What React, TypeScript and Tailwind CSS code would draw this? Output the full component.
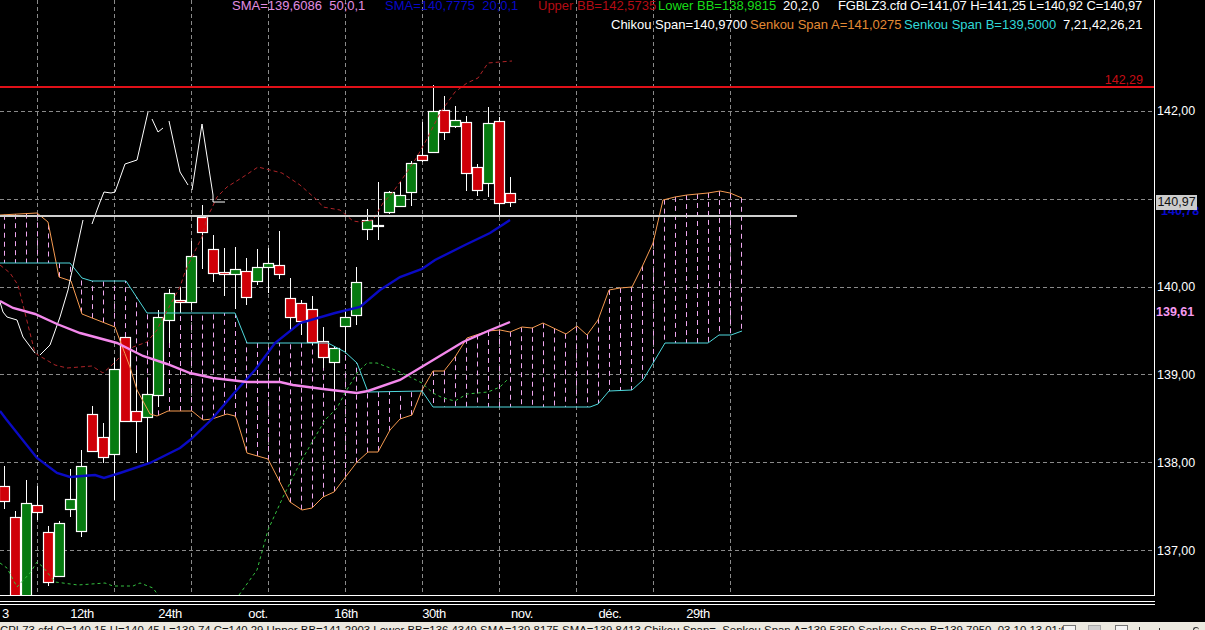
type Pt = [number, number];

// [wickTop, bodyTop, bodyBottom, wickBottom, up]
const candles: [number, number, number, number, boolean][] = [
  [466, 486, 501, 509, false],
  [511, 517, 600, 600, false],
  [480, 503, 600, 600, true],
  [486, 505, 512, 520, false],
  [526, 532, 582, 586, false],
  [521, 523, 576, 576, true],
  [469, 499, 509, 517, true],
  [450, 466, 531, 537, true],
  [406, 414, 451, 452, false],
  [423, 437, 457, 463, false],
  [358, 369, 454, 500, true],
  [337, 337, 421, 421, false],
  [370, 411, 421, 453, false],
  [380, 394, 417, 462, true],
  [310, 317, 395, 407, true],
  [289, 293, 320, 343, true],
  [287, 300, 302, 313, false],
  [241, 256, 302, 310, true],
  [205, 217, 232, 269, false],
  [235, 249, 273, 282, false],
  [248, 272, 274, 296, false],
  [247, 269, 274, 309, true],
  [258, 271, 297, 305, false],
  [249, 267, 281, 285, true],
  [248, 263, 267, 293, true],
  [231, 265, 274, 279, false],
  [278, 298, 317, 330, false],
  [300, 303, 321, 335, false],
  [296, 309, 342, 345, false],
  [327, 341, 357, 368, false],
  [346, 348, 362, 400, true],
  [309, 317, 326, 353, true],
  [267, 282, 315, 325, true],
  [209, 220, 229, 240, true],
  [182, 225, 226, 240, true],
  [191, 192, 212, 214, true],
  [182, 195, 206, 206, true],
  [161, 163, 192, 206, true],
  [122, 155, 160, 162, false],
  [85, 111, 152, 153, true],
  [96, 110, 132, 140, false],
  [106, 120, 126, 128, true],
  [116, 122, 173, 191, false],
  [164, 167, 190, 196, false],
  [107, 123, 183, 197, true],
  [117, 121, 203, 215, false],
  [177, 193, 202, 207, false],
];

const senkouA: Pt[] = [[0, 215], [37, 213], [48, 222], [59, 277], [71, 281], [82, 314], [115, 327], [119, 338], [130, 367], [137, 390], [150, 414], [157, 416], [168, 411], [192, 411], [203, 420], [212, 419], [227, 414], [235, 416], [237, 420], [247, 453], [268, 459], [290, 502], [302, 510], [312, 508], [323, 497], [334, 492], [357, 462], [368, 452], [378, 452], [390, 430], [400, 419], [412, 415], [422, 390], [433, 371], [444, 371], [455, 357], [467, 338], [488, 331], [500, 330], [510, 332], [522, 327], [532, 328], [543, 323], [566, 334], [577, 326], [587, 335], [598, 320], [609, 290], [620, 288], [632, 287], [642, 267], [653, 243], [663, 200], [675, 197], [687, 195], [708, 193], [720, 191], [730, 193], [742, 198]];
const senkouB: Pt[] = [[0, 263], [70, 263], [82, 278], [92, 281], [126, 281], [147, 313], [235, 313], [247, 343], [328, 343], [345, 352], [357, 363], [368, 392], [422, 391], [433, 407], [590, 407], [598, 404], [609, 391], [632, 390], [643, 380], [665, 343], [708, 343], [719, 335], [731, 335], [742, 331]];
const smaBlue: Pt[] = [[0, 411], [6, 419], [37, 458], [57, 473], [70, 477], [95, 475], [104, 478], [120, 473], [150, 463], [180, 448], [190, 440], [212, 419], [235, 392], [255, 370], [275, 343], [300, 323], [335, 313], [360, 307], [380, 290], [400, 277], [422, 269], [435, 260], [465, 245], [490, 233], [510, 220]];
const smaPink: Pt[] = [[0, 301], [13, 308], [35, 314], [57, 324], [80, 333], [117, 343], [143, 356], [167, 364], [190, 373], [213, 378], [247, 382], [280, 382], [293, 385], [323, 389], [357, 393], [368, 391], [400, 380], [463, 342], [488, 331], [510, 322]];
const kijun: Pt[] = [[0, 265], [10, 273], [18, 285], [25, 313], [35, 353], [38, 355], [55, 365], [67, 368], [92, 366], [103, 373], [112, 365], [120, 357], [133, 347], [147, 342], [157, 330], [163, 318], [180, 287], [185, 272], [192, 257], [202, 237], [207, 217], [211, 210], [217, 197], [227, 187], [243, 177], [258, 167], [282, 173], [300, 185], [317, 200], [323, 207], [340, 210], [353, 221], [360, 222], [373, 220], [383, 203], [393, 192], [405, 175], [417, 157], [428, 137], [440, 113], [455, 92], [467, 83], [478, 78], [488, 63], [500, 62], [512, 61]];
const chikou: Pt[][] = [
  [[0, 302], [3, 312], [7, 317], [17, 320], [23, 337], [35, 353]],
  [[40, 355], [50, 345], [60, 317], [68, 290], [75, 257], [83, 220]],
  [[92, 224], [97, 210], [100, 202], [104, 192], [111, 193], [115, 192], [125, 164], [137, 160], [148, 112]],
  [[152, 119], [158, 132], [163, 128]],
  [[169, 121], [180, 172], [188, 185]],
  [[192, 190], [202, 124], [213, 195], [213, 202], [225, 202]],
];
const greenDash: Pt[][] = [
  [[0, 563], [7, 568], [17, 587], [30, 573], [37, 562], [43, 567], [55, 582], [78, 585], [105, 583], [113, 586], [133, 586], [140, 583], [153, 588], [158, 595]],
  [[239, 595], [257, 570], [268, 530], [283, 497], [300, 463], [325, 420], [337, 408], [345, 393], [357, 373], [367, 363], [377, 363], [390, 368], [400, 372], [422, 383], [433, 393], [443, 398], [455, 401], [467, 394], [488, 392], [500, 387], [508, 379]],
];

const toPoints = (pts: Pt[]) => pts.map((p) => p.join(",")).join(" ");

function yAt(pts: Pt[], x: number) {
  for (let i = 1; i < pts.length; i++) {
    const [x0, y0] = pts[i - 1];
    const [x1, y1] = pts[i];
    if (x <= x1) return y0 + ((y1 - y0) * (x - x0)) / (x1 - x0);
  }
  return pts[pts.length - 1][1];
}

const hatchX = Array.from({ length: 68 }, (_, i) => 4.5 + i * 11).filter((x) => x <= 742);
const gridX = [37.5, 114.5, 191.5, 268.5, 345.5, 422.5, 499.5, 576.5, 653.5, 730.5];
const gridY = [111.5, 199.5, 287.5, 374.5, 462.5, 550.5];
const ticks = ["142,00", "", "140,00", "139,00", "138,00", "137,00"];
const dates = ["12th", "24th", "oct.", "16th", "30th", "nov.", "déc.", "29th"];

function Chart() {
  return (
    <svg width="1154" height="595" viewBox="0 0 1154 595" className="block" fill="none">
      {gridX.map((x) => (
        <line key={x} x1={x} y1="0" x2={x} y2="595" stroke="#8a8a8a" strokeDasharray="4 3" />
      ))}
      {gridY.map((y) => (
        <line key={y} x1="0" y1={y} x2="1154" y2={y} stroke="#8a8a8a" strokeDasharray="4 3" />
      ))}
      {hatchX.map((x) => (
        <line key={x} x1={x} y1={yAt(senkouA, x)} x2={x} y2={yAt(senkouB, x)} stroke="#f0a8f0" strokeDasharray="5 4" />
      ))}
      {candles.map(([wt, bt, bb, wb, up], i) => {
        const cx = 4.5 + i * 11;
        return (
          <g key={i}>
            <line x1={cx} y1={wt} x2={cx} y2={wb} stroke="#fff" />
            <rect x={cx - 5} y={bt + 0.5} width="10" height={Math.max(bb - bt, 1)} fill={up ? "#067a10" : "#cf0008"} stroke="#fff" strokeWidth="1.2" />
          </g>
        );
      })}
      <polyline points={toPoints(senkouA)} stroke="#f59a50" />
      <polyline points={toPoints(senkouB)} stroke="#4ed8dc" />
      <polyline points={toPoints(kijun)} stroke="#b02428" strokeDasharray="4 3" />
      {greenDash.map((pts, i) => (
        <polyline key={i} points={toPoints(pts)} stroke="#34c040" strokeDasharray="3 3" />
      ))}
      {chikou.map((pts, i) => (
        <polyline key={i} points={toPoints(pts)} stroke="#fff" />
      ))}
      <polyline points={toPoints(smaBlue)} stroke="#0a0ac4" strokeWidth="2.4" />
      <polyline points={toPoints(smaPink)} stroke="#f488ec" strokeWidth="2.4" />
      <line x1="0" y1="87" x2="1154" y2="87" stroke="#e01018" strokeWidth="2" />
      <line x1="0" y1="216" x2="797" y2="216" stroke="#cfcfcf" strokeWidth="2" />
    </svg>
  );
}

export default function App() {
  return (
    <div className="relative flex h-[630px] w-[1205px] flex-col overflow-hidden bg-black font-['Liberation_Sans',Arial,sans-serif] text-[13px] leading-[15px] text-white">
      <div className="flex h-[596px]">
        <div className="relative h-[596px] w-[1155px] border-r border-b border-white">
          <Chart />

          <div className="absolute top-[-2px] left-0 flex w-full whitespace-pre">
            <span className="ml-[232px] w-[153px] text-[#e28ee2]">SMA=139,6086  50;0,1</span>
            <span className="w-[153px] text-[#0808c8]">SMA=140,7775  20;0,1</span>
            <span className="w-[120px] text-[#b40c14]">Upper BB=142,5735</span>
            <span className="w-[125px] text-[#18dc18]">Lower BB=138,9815</span>
            <span className="w-[55px]">20,2,0</span>
            <span className="tracking-[-0.13px]">FGBLZ3.cfd O=141,07 H=141,25 L=140,92 C=140,97</span>
          </div>
          <div className="absolute top-[17px] left-0 flex w-full whitespace-pre">
            <span className="ml-[611px] w-[139px]">Chikou Span=140,9700</span>
            <span className="w-[154px] text-[#e48a34]">Senkou Span A=141,0275</span>
            <span className="w-[159px] text-[#30d8d8]">Senkou Span B=139,5000</span>
            <span>7,21,42,26,21</span>
          </div>
          <span className="absolute top-[73px] right-[11px] text-[12.5px] text-[#c80c14]">142,29</span>
        </div>

        <div className="relative flex w-[50px] flex-col pt-[67px] pl-[2px] text-[12.5px]">
          {ticks.map((t, i) => (
            <div key={i} className="flex h-[88px] shrink-0 items-center">
              {t}
            </div>
          ))}
          <span className="absolute top-[204px] left-[6px] font-bold text-[#0a0ad0]">140,78</span>
          <span className="absolute top-[195px] left-[1px] flex h-[15px] w-[41px] items-center justify-center bg-[#cccccc] text-[12.5px] text-[#111]">140,97</span>
          <span className="absolute top-[305px] left-[1px] font-bold text-[#f59af0]">139,61</span>
        </div>
      </div>

      <div className="mt-[5px] h-[1px] w-[1155px] bg-white" />
      <div className="mt-[2px] h-[1px] w-[1155px] bg-white" />

      <div className="flex h-[17px] items-center text-[13px] tracking-[-0.4px]">
        <span className="ml-[2px] w-[36px]">3</span>
        {dates.map((d) => (
          <span key={d} className="w-[88px] text-center">
            {d}
          </span>
        ))}
      </div>

      <div className="flex h-[8px] items-start overflow-hidden bg-[#ece9e0] text-[11.4px] whitespace-pre text-[#111]">
        <span className="mt-[1px] w-[1063px] shrink-0 overflow-hidden">CPL73.cfd O=140,15 H=140,45 L=139,74 C=140,29 Upper BB=141,2903 Lower BB=136,4349 SMA=139,8175 SMA=139,8413 Chikou Span=  Senkou Span A=139,5350 Senkou Span B=139,7950  03.10.13 01:00:00 13:</span>
        <span className="mt-[3px] h-[8px] w-[13px] shrink-0 border border-[#777] bg-[#f4f4f4]" />
        <span className="mt-[3px] ml-[12px] h-[8px] w-[13px] shrink-0 border border-[#aaa] bg-[#cfcfcf]" />
        <span className="mt-[3px] ml-[14px] h-[8px] w-[13px] shrink-0 border border-[#777] bg-[#f4f4f4]" />
        <span className="mt-[5px] ml-[11px] h-[3px] w-[1px] shrink-0 bg-[#333]" />
        <span className="mt-[6px] ml-[19px] h-[2px] w-[1px] shrink-0 bg-[#333]" />
        <span className="mt-[5px] ml-[33px] h-[3px] w-[6px] shrink-0 rounded-t-full border-t border-l border-[#333]" />
      </div>
    </div>
  );
}
